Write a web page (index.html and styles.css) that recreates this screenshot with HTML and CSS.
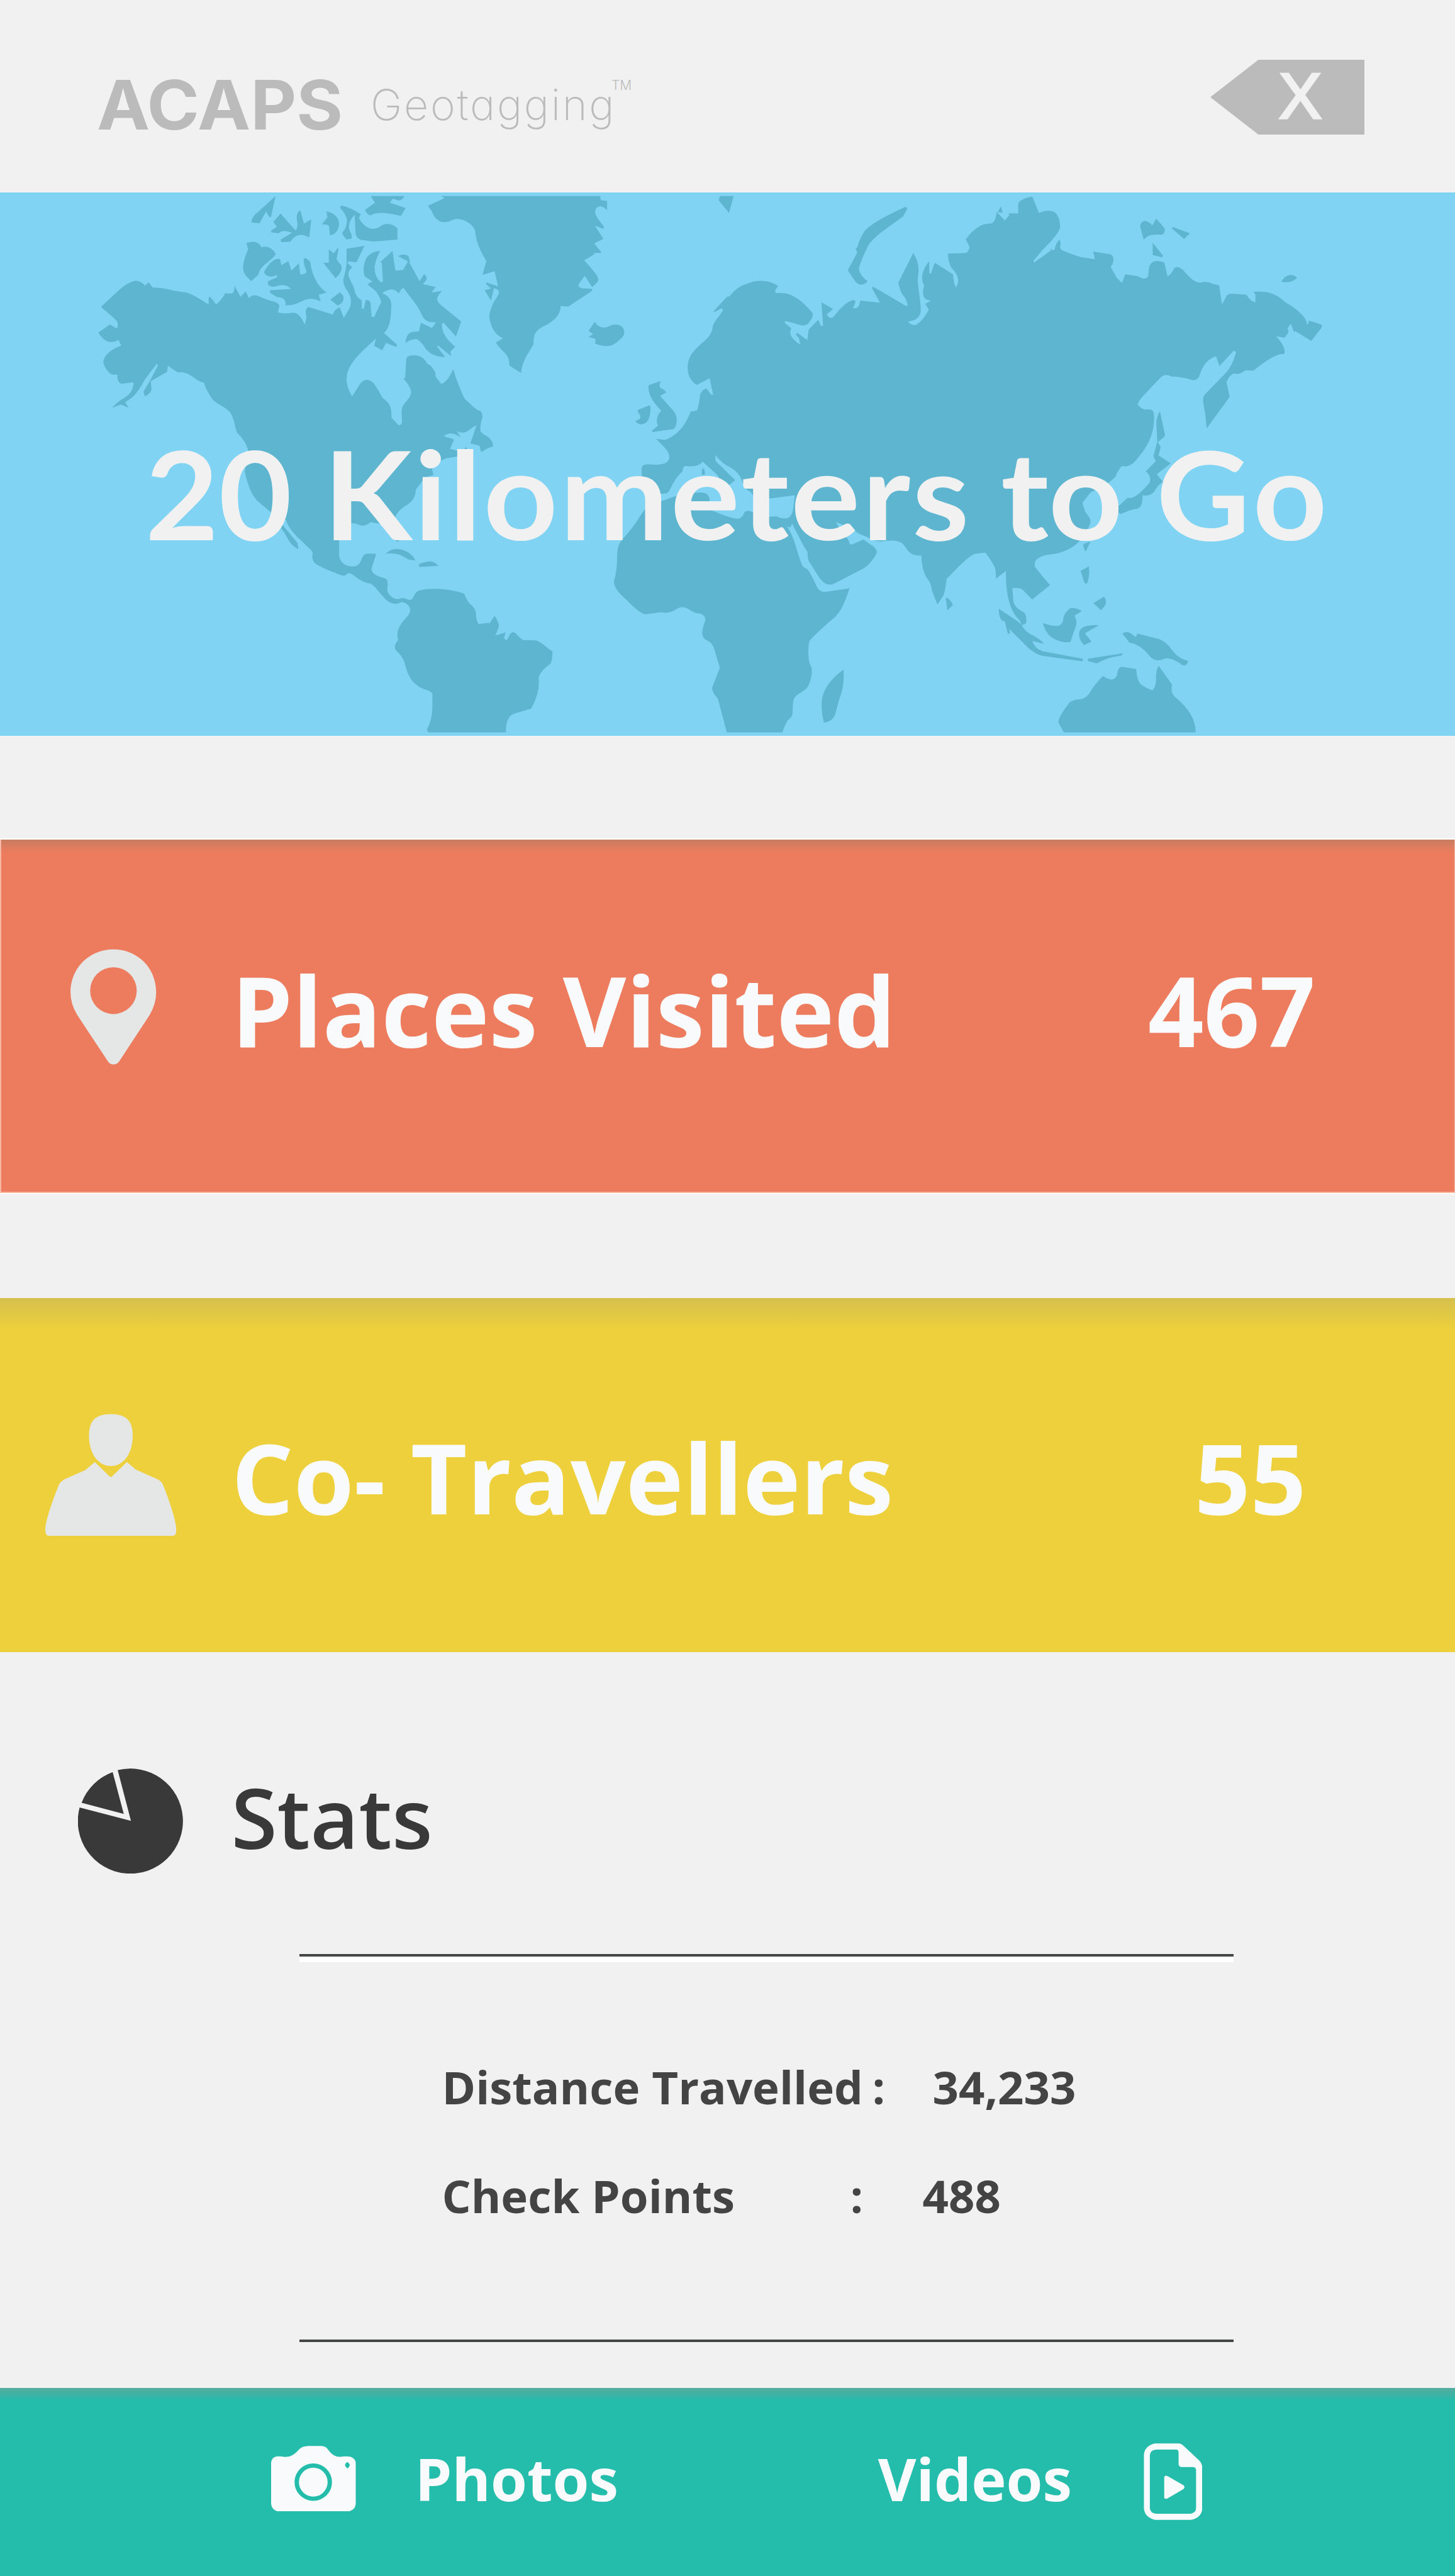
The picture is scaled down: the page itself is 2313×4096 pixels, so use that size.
FILE: index.html
```html
<!DOCTYPE html>
<html lang="en">
<head>
<meta charset="utf-8">
<title>ACAPS Geotagging</title>
<link rel="stylesheet" href="styles.css">
</head>
<body>
<header class="topbar">
  <div class="logo"><span class="brand">ACAPS</span><span class="product">Geotagging</span><span class="tm">TM</span></div>
  <svg class="close" viewBox="0 0 245 119"><path fill="#bbb" d="M0 59.5 76.500 0H245V119H76.500Z"/><text class="close-x" x="109" y="93">X</text></svg>
</header>

<section class="hero">
  <svg class="map" viewBox="0 354 2675 999.500" preserveAspectRatio="none" fill="#5db5cf">
    <!-- North America, northern half, with the Arctic islands -->
    <g transform="translate(150 350) scale(.510204 .333333)">
      <path d="M72,640 L125,565 Q170,500 198,500 Q210,502 226,520 L227,528 L242,508 L256,537 Q290,537 320,549 Q350,560 368,562 C395,565 430,605 458,630 L458,592 L463,588 L485,630 Q505,605 518,567 Q530,572 543,569 Q551,560 551,527 L573,588 L591,558 L603,594 Q615,576 630,580 C650,592 670,605 685,611 Q713,622 713,640 L707,674 Q735,684 760,676 Q785,670 804,742 L811,700 Q802,660 817,644 L906,686 Q908,660 930,646 L945,704 L962,660 Q972,640 970,600 Q968,575 955,550 Q942,520 943,490 Q955,430 955,390 L955,323 L1019,307 L991,397 L960,393 L958,401 L976,426 Q960,440 961,468 C970,510 980,520 985,560 Q990,590 1009,607 L1010,654 L1017,652 L1024,606 Q1036,604 1041,620 L1045,698 L1054,699 L1080,616 Q1070,570 1055,550 L1030,519 L1048,503 L1020,475 Q1012,440 1020,400 Q1030,340 1076,335 Q1060,380 1056,420 Q1055,480 1078,507 L1086,506 L1082,400 L1076,397 L1120,335 L1131,444 L1159,440 L1176,392 L1140,363 Q1165,345 1178,365 L1184,396 L1180,396 L1218,502 L1234,462 Q1248,480 1241,498 L1230,518 L1276,534 L1261,564 L1299,555 Q1282,580 1281,603 Q1283,620 1300,640 L1368,724 L1349,807 L1304,730 L1298,740 Q1298,785 1320,825 L1346,864 L1329,890 L1331,914 L1285,857 L1281,862 L1310,920 Q1265,920 1240,875 Q1220,825 1205,821 Q1185,822 1167,842 Q1170,800 1183,787 Q1192,778 1215,780 L1223,731 L1262,760 L1278,728 Q1245,734 1230,700 Q1215,650 1205,630 L1160,539 Q1150,545 1143,570 Q1130,545 1112,547 Q1095,552 1083,569 Q1115,585 1116,630 Q1116,760 1089,787 L1137,853 L1133,864 L1097,842 L1083,883 L1055,859 L1060,818 L1010,890 C965,960 955,1000 955,1050 Q958,1100 975,1137 L1005,1065 Q1030,1025 1055,1070 Q1072,1110 1085,1147 Q1117,1180 1116,1230 L1117,1255 L1142,1297 Q1153,1295 1155,1280 Q1154,1260 1153,1220 Q1153,1190 1172,1162 Q1190,1130 1187,1105 Q1180,1070 1159,1038 L1166,1037 L1170,930 Q1172,912 1195,911 Q1230,908 1246,958 Q1262,965 1275,1008 L1275,1027 L1296,1069 Q1320,1055 1339,987 Q1355,1070 1380,1150 Q1395,1170 1415,1200 Q1425,1214 1437,1218 Q1447,1235 1444,1255 Q1435,1300 1437,1328 Q1442,1343 1462,1358 Q1485,1385 1482,1415 Q1462,1420 1440,1446 L1434,1410 L1401,1397 L1423,1298 Q1415,1300 1395,1325 Q1375,1348 1352,1329 L1366,1364 Q1345,1340 1327,1341 Q1312,1347 1305,1357 L1342,1375 L1328,1427 Q1350,1437 1362,1438 Q1378,1437 1386,1416 L1396,1458 L1310,1480 Q1295,1490 1288,1500 L610,1500 L600,1433 Q592,1385 560,1337 C550,1290 550,1260 535,1225 C515,1190 490,1185 470,1150 Q450,1105 440,1061 Q430,1060 410,1040 Q378,1003 360,1004 Q350,1006 343,1002 L311,968 L308,1002 L249,1054 L252,1100 Q250,1120 228,1137 L223,1110 L245,1056 L276,964 L271,957 L230,1040 Q205,1110 185,1140 L157,1170 L170,1201 L142,1182 L110,1201 Q130,1165 155,1145 Q187,1115 187,1059 L145,1068 Q127,1060 129,1017 Q110,1022 100,1008 Q80,975 78,945 Q85,890 143,857 L133,826 Q120,838 100,837 Q80,832 60,786 L102,741 L127,763 Q135,735 125,718 Q110,695 72,647Z"/>
      <path d="M699,32 L682,149 Q675,150 665,117 L641,182 L612,178 Q612,150 630,127Z"/>
      <path d="M717,128 L771,222 Q782,205 776,165 Q772,125 788,110 L801,184 L828,160 L820,260 Q785,230 762,265 Q755,280 750,284 L720,286 L717,272 L758,235 Q725,212 710,238 L684,232 L683,222 L704,201 L691,175Z"/>
      <path d="M882,116 Q925,130 928,185 Q925,240 895,249 L892,200 Q892,188 866,188 L886,150Z"/>
      <path d="M936,84 Q970,95 1006,133 L999,153 Q1020,210 1050,213 Q1070,210 1082,193 Q1110,172 1138,210 L1138,272 L1052,283 L1005,273 Q988,260 987,235 L984,135 Q950,190 972,240 L974,266 L955,271 Q945,260 939,235 Q958,205 956,160 Q950,125 931,96Z"/>
      <path d="M1042,32 L1163,32 Q1155,60 1140,55 L1122,46 L1110,68 L1168,98 L1150,142 Q1085,115 1052,130 Q1040,145 1030,130 L1021,109 L1057,68Z"/>
      <path d="M594,291 Q635,270 648,315 Q680,300 700,352 Q690,375 660,410 Q640,435 637,465 L612,501 Q580,465 582,420 Q583,385 600,325Z"/>
      <path d="M700,380 L715,379 L720,414 L745,391 L756,443 L783,403 L788,465 Q812,465 810,445 Q800,410 800,380 L807,373 L824,395 C830,470 850,530 883,565 L854,577 L862,614 Q825,585 790,615 Q765,635 735,636 Q738,590 705,590 L678,565 L681,552 L755,545 Q735,510 700,530 Q670,540 671,503 L705,480 L703,468 Q670,490 657,452 Q680,390 700,380Z"/>
      <path d="M891,326 L909,349 L922,320 L926,322 L919,380 Q922,395 932,407 Q947,440 915,485 L871,400 L891,400Z"/>
      <path d="M931,563 L942,580 Q950,620 922,635 L896,604Z"/>
    </g>
    <!-- Greenland, Iceland, Svalbard, British Isles -->
    <g transform="translate(750 350) scale(.446429 .333333)">
      <path d="M136,32 L793,32 Q790,52 800,56 L820,59 L820,109 Q805,90 793,88 Q770,90 771,125 Q773,140 785,162 L808,204 L803,212 L770,195 L805,268 L767,293 L798,345 L765,346 L768,353 L726,386 L765,447 Q785,480 784,495 Q780,512 758,534 L728,472 L702,520 Q700,538 720,541 L758,544 L759,554 L660,642 L629,638 Q630,695 575,740 Q530,765 522,795 Q516,820 517,850 Q500,890 490,910 Q472,950 465,1008 L417,966 Q420,930 400,900 Q370,860 362,840 L392,817 Q345,790 335,700 Q335,670 352,620 Q378,570 375,560 Q370,542 354,541 L342,609 L316,552 L342,542 L322,518 L323,508 L371,530 L357,447 L307,467 L323,390 Q280,300 277,225 Q270,190 235,168 Q205,150 185,163 Q145,190 120,160 Q108,148 98,115 L82,86 L151,43Z"/>
      <path d="M769,726 Q790,770 825,752 Q860,730 880,750 Q900,780 884,810 Q860,840 850,848 Q820,872 771,846 L773,820 L744,809 L763,794 L744,776Z"/>
      <path d="M1285,32 L1341,32 L1322,125 L1280,55Z"/>
      <path d="M991,1076 L1042,1052 Q1030,1080 1042,1092 Q1060,1105 1064,1116 L1038,1135 L1080,1197 Q1110,1235 1107,1275 Q1103,1310 1093,1318 L1007,1334 L1006,1326 L1030,1299 Q1015,1260 1043,1216 Q985,1140 991,1076Z"/>
      <path d="M950,1210 L996,1186 Q1002,1200 996,1240 Q990,1290 960,1292 Q940,1288 937,1273 Q960,1265 957,1245 L945,1218Z"/>
    </g>
    <!-- North America, southern half, and South America -->
    <g transform="translate(450 750) scale(.510204 .389029)">
      <path d="M12,200 L0,300 Q15,400 45,440 L90,490 L130,530 L148,530 Q160,580 205,630 L240,675 Q247,685 243,700 Q243,730 260,742 Q300,770 325,780 Q345,793 355,794 Q365,793 370,784 Q380,778 395,795 Q430,830 450,830 Q465,838 480,865 L510,910 Q540,940 565,919 Q595,925 596,960 Q595,975 580,995 Q540,1050 553,1098 Q538,1120 542,1140 Q545,1150 555,1160 Q575,1190 578,1215 C590,1280 610,1310 645,1330 Q665,1337 676,1350 L676,1420 Q675,1480 656,1522 L662,1535 L941,1535 Q940,1455 975,1445 Q1020,1428 1032,1423 Q1065,1345 1059,1280 Q1060,1250 1102,1210 Q1108,1195 1109,1153 L1095,1140 Q1060,1100 1045,1100 Q1030,1098 1005,1099 Q995,1095 980,1072 Q970,1055 960,1065 Q955,1070 944,1101 L934,1090 L940,1062 L903,1077 L916,1035 Q915,1010 900,984 L881,1022 L879,1017 L842,1023 Q832,1000 833,970 Q830,945 810,925 Q800,912 791,879 Q740,856 685,856 Q640,857 625,866 Q613,875 606,900 Q600,913 590,908 Q570,895 560,903 Q540,910 525,890 Q512,875 514,850 Q518,815 507,808 C470,795 455,780 457,762 C462,730 468,720 473,691 Q445,688 435,692 Q425,698 420,720 Q410,755 385,750 Q345,745 340,700 L340,540 L400,548 Q415,558 428,558 Q445,552 453,541 L505,552 L548,634 L557,628 L543,520 Q545,490 590,455 Q618,425 616,388 L650,330 L680,318 L675,290 Q690,255 725,240 L690,200Z"/>
      <path d="M135,552 L190,640 L193,669 Q170,655 155,620 Q140,580 130,570Z"/>
      <path d="M508,690 Q525,668 545,668 C575,668 605,690 615,722 L592,719 Q580,710 570,702 Q545,685 508,690Z"/>
      <path d="M628,739 Q650,728 667,726 Q685,728 698,748 L628,753Z"/>
    </g>
    <!-- Europe, western Asia, Africa -->
    <g transform="translate(1150 350) scale(.510204 .644122)">
      <path d="M1465,18 Q1420,25 1415,40 L1415,66 L1380,66 L1383,71 L1367,86 L1340,64 L1353,46 L1359,64 L1338,62 Q1332,95 1315,95 Q1270,93 1226,140 L1240,162 Q1235,178 1225,179 L1162,181 Q1162,205 1175,222 Q1200,240 1199,262 L1191,278 Q1182,265 1180,240 L1114,207 L1101,238 L1095,237 L1094,203 Q1075,220 1069,243 Q1068,260 1076,272 Q1065,305 1085,312 L1101,316 L1080,324 L1093,341 Q1065,380 1043,385 Q1028,385 1017,375 Q1060,372 1064,345 C1064,310 1050,270 1054,245 Q1062,210 1037,179 L983,264 Q990,290 1000,300 Q1012,308 1017,330 L1010,330 L892,275 L888,279 L917,321 L845,315 Q843,340 820,337 L829,318 L822,313 Q790,320 757,354 Q740,375 725,354 L748,339 L706,320 L712,387 L705,388 L694,370 L660,398 L655,428 L619,407 L613,412 L625,422 L630,441 Q590,420 594,403 L597,394 L573,378 L577,373 L630,385 Q655,390 665,373 Q680,358 672,349 Q620,300 575,294 L555,293 Q535,296 540,285 L550,273 Q500,248 440,266 Q400,275 376,302 L365,305 L318,345 L320,348 L347,337 L351,343 L340,357 Q320,375 315,387 Q312,410 293,424 C240,460 225,475 224,508 Q225,540 257,556 L303,537 L316,584 L309,584 L291,566 Q267,572 267,595 Q265,615 257,629 L235,632 Q205,695 142,713 L110,710 L135,730 Q160,748 158,765 Q153,780 130,782 Q115,785 90,783 Q58,780 58,795 L60,855 L78,866 L110,868 L143,866 Q155,865 160,855 Q180,820 205,803 L208,792 Q212,785 225,788 Q265,790 278,775 L330,812 L360,850 L395,828 L370,808 L324,773 L324,756 Q350,782 375,790 Q410,805 420,830 Q432,858 450,860 L466,880 L522,880 L610,871 L605,905 Q600,935 580,937 Q560,938 545,931 L520,932 L465,922 Q440,910 428,920 Q420,940 400,938 Q370,935 300,910 L303,883 Q300,863 268,863 Q200,865 140,885 L85,898 Q60,920 45,940 Q20,970 -6,992 Q-30,1010 -30,1040 Q-30,1090 -42,1118 Q-40,1140 0,1167 Q45,1205 70,1211 L125,1205 Q155,1210 180,1198 Q205,1182 235,1200 Q250,1208 270,1209 Q288,1214 288,1228 Q272,1260 278,1272 Q283,1282 295,1286 Q310,1290 320,1310 L340,1364 L312,1420 Q312,1435 333,1452 L365,1548 L565,1548 Q580,1515 590,1510 Q602,1503 602,1490 Q603,1455 608,1450 C620,1435 650,1432 662,1410 Q675,1380 670,1362 Q655,1345 660,1300 Q660,1290 668,1282 Q700,1255 750,1222 Q780,1205 807,1137 L720,1147 Q700,1148 690,1133 Q665,1090 655,1082 L639,1075 Q630,1060 615,1020 Q600,980 582,960 L594,963 L600,952 L625,990 Q640,1015 656,1033 Q655,1055 665,1065 L700,1108 Q725,1135 755,1122 L860,1079 Q890,1062 906,1035 Q905,1020 880,1010 L858,997 L815,1012 L808,1010 Q803,990 780,980 L758,947 L775,953 L820,965 Q825,978 870,990 Q890,1002 920,1003 Q980,995 1000,1010 C1015,1022 1020,1045 1066,1043 Q1068,1090 1090,1112 Q1100,1120 1105,1145 L1124,1183 L1145,1158 Q1152,1145 1157,1110 L1200,1075 Q1245,1040 1260,1038 L1297,1035 Q1335,1075 1334,1090 L1335,1109 L1371,1087 Q1368,1190 1420,1228 L1428,1242 L1443,1237 Q1448,1215 1435,1205 Q1395,1190 1397,1165 L1394,1136 Q1420,1134 1430,1140 L1465,1168 L1475,1160 L1475,400 L1468,300 L1470,60Z"/>
      <path d="M1345,1195 L1412,1230 L1428,1242 Q1440,1262 1470,1272 Q1500,1285 1507,1295 L1466,1287 Q1475,1310 1505,1317 L1648,1338 L1647,1345 L1505,1330 Q1470,1325 1430,1290 L1382,1252 L1386,1265 L1378,1267 L1367,1231 Q1345,1230 1345,1195Z"/>
      <path d="M276,795 L284,795 L286,812 L275,812Z"/>
      <path d="M786,1369 Q788,1410 778,1435 Q765,1465 758,1490 Q748,1518 715,1520 Q700,1470 712,1440 Q730,1400 786,1369Z"/>
      <path d="M1154,1164 Q1165,1162 1180,1184 L1160,1200Z"/>
      <path d="M1009,47 L1016,52 L1000,75 L930,115 Q880,145 870,165 Q840,215 841,227 Q850,248 873,260 Q850,278 830,262 L801,229 L835,178 L829,165 L834,165 Q845,135 862,116 Q890,90 1009,47Z"/>
    </g>
    <!-- Eastern Asia, the Pacific islands and Australia -->
    <g transform="translate(1850 350) scale(.446429 .644122)">
      <path d="M107,18 L135,65 Q175,53 200,63 Q225,80 221,108 Q215,125 150,170 L112,201 L114,207 L186,171 L179,166 L198,172 Q203,150 220,141 Q226,150 222,160 Q220,168 232,172 Q300,192 320,192 L365,197 L358,175 L430,183 Q448,190 438,210 L430,219 L455,250 L477,265 L490,240 L540,245 Q585,262 586,238 Q585,205 615,202 Q640,202 651,207 L664,246 Q680,240 692,222 Q712,213 740,237 Q775,265 800,264 Q825,258 850,267 L877,272 L888,326 Q895,320 905,304 Q913,293 940,296 L989,298 Q1005,317 1026,320 L1026,298 L1018,290 C1080,287 1110,295 1150,320 Q1235,355 1239,383 L1242,384 L1247,372 L1299,384 L1299,392 L1256,430 L1190,402 L1185,405 L1172,381 L1158,394 Q1170,405 1145,421 L1111,417 Q1150,445 1146,465 L1143,468 Q1110,463 1018,515 L985,514 Q960,528 940,523 Q920,525 907,548 L920,590 L825,680 L820,640 C808,600 808,590 820,582 Q850,560 900,525 Q930,505 947,462 L937,458 L878,502 L864,474 Q815,485 798,525 Q790,545 765,542 Q725,532 680,532 Q655,522 635,535 L560,590 Q545,602 541,612 Q560,628 580,626 Q608,624 608,640 C612,690 590,730 525,778 Q500,792 477,787 Q458,800 450,818 L428,832 L400,845 L347,863 L314,892 Q320,915 335,928 Q350,940 346,950 Q335,975 300,1003 Q255,1035 180,1040 Q120,1045 112,1071 L180,1128 L107,1168 L92,1156 L90,30Z"/>
      <path d="M633,631 L651,690 Q655,700 651,704 L624,719 L636,733 L627,757 L677,780 L620,811 L645,833 Q620,845 612,858 Q595,875 561,871 Q562,905 540,909 Q510,912 470,925 L450,910 L500,878 Q530,885 590,835 Q600,820 575,802 L616,774 L606,759 L622,718 L618,665 Q620,645 633,631Z"/>
      <path d="M318,1010 L347,1003 L327,1032 Q316,1020 318,1010Z"/>
      <path d="M306,1087 L340,1074 Q346,1100 332,1124 L322,1121Z"/>
      <path d="M359,1179 L403,1160 Q417,1175 405,1188 L390,1199Z"/>
      <path d="M151,1236 Q190,1245 215,1244 Q235,1238 235,1222 Q240,1205 265,1193 Q285,1192 310,1200 L306,1204 L281,1215 Q293,1230 287,1245 Q275,1265 265,1289 L258,1291 Q170,1290 151,1236Z"/>
      <path d="M382,1242 L324,1265 L351,1289 L320,1299 Q295,1280 301,1262 Q305,1240 382,1242Z"/>
      <path d="M336,1338 L481,1322 L474,1329 Q420,1333 373,1351 L336,1344Z"/>
      <path d="M478,1266 Q500,1255 525,1272 L534,1276 L540,1266 L630,1282 Q660,1290 685,1315 Q710,1338 749,1344 Q745,1360 725,1356 Q680,1332 650,1338 Q615,1350 590,1330 Q550,1295 508,1292Z"/>
      <path d="M237,1548 L215,1520 Q213,1505 262,1462 Q275,1455 310,1453 Q335,1447 345,1433 Q360,1415 398,1387 Q440,1407 455,1387 Q460,1362 475,1361 L535,1367 Q538,1400 553,1410 Q570,1420 602,1428 Q615,1420 617,1400 Q615,1370 628,1358 L683,1412 Q675,1435 695,1447 Q780,1495 780,1548Z"/>
      <path d="M565,88 Q550,95 552,105 L566,141 Q585,123 640,127 Q655,123 653,110 Q640,98 617,81 L602,100 Q580,85 565,88Z"/>
      <path d="M681,108 L687,105 L756,123 L732,139Z"/>
      <path d="M603,150 L646,187 L641,191 L603,185Z"/>
      <path d="M1132,261 Q1160,230 1198,249 Q1175,267 1132,261Z"/>
    </g>
  </svg>
  <h1 class="headline"><span class="amount">20</span> <span class="unit">Kilometers</span> <span>to</span> <span class="go">Go</span></h1>
</section>

<section class="card places">
  <svg class="icon pin" viewBox="291 505 354 477" fill="#e5e7e6"><path fill-rule="evenodd" d="M468 506C568 506 644 584 644 684Q644 732 617 777L492 968Q483 981 468 981T445 968L319 777Q291 732 291 684C291 584 368 506 468 506ZM468 580A96 96.500 0 1 0 468 773A96 96.500 0 1 0 468 580Z"/></svg>
  <span class="label">Places Visited</span><span class="count">467</span>
</section>

<section class="card travellers">
  <svg class="icon person" viewBox="187 516 540 504" fill="#e5e7e6"><path d="M457 517C520 517 547 545 547 605C547 680 510 731 457 731S367 680 367 605C367 545 394 517 457 517Z"/><path d="M391 715 452 774Q457 779 462 774L523 715 560 746 650 786Q665 794 671 806C700 878 727 960 727 995Q727 1019 712 1019H202Q187 1019 187 995C187 960 214 880 244 806Q250 796 264 787L352 748Z"/></svg>
  <span class="label">Co- Travellers</span><span class="count">55</span>
</section>

<section class="stats">
  <div class="stats-head">
    <svg class="pie" viewBox="0 0 193.500 193.500" fill="#393939"><path d="M97.400 96.300 73 3A96.700 96.700 0 1 1 3 71.700Z"/><path d="M84.200 83.700 63.800 6.700A96.700 96.700 0 0 0 6.600 63Z"/></svg>
    <h2>Stats</h2>
  </div>
  <div class="figures">
    <div class="figure distance"><span class="name">Distance Travelled</span><span class="colon">:</span><span>34,233</span></div>
    <div class="figure points"><span class="name">Check Points</span><span class="colon">:</span><span>488</span></div>
  </div>
</section>

<footer class="tabs">
  <a class="tab photos"><svg class="camera" viewBox="171 743 272 362" preserveAspectRatio="none" fill="#f9fafc"><path fill-rule="evenodd" d="M290 744H332Q347 744 355 768Q372 806 392 804Q420 797 431 808Q442 818 442 840V1065Q440 1095 422 1104H190Q174 1096 171 1065V835Q173 808 187 802Q200 799 215 805Q240 806 262 760Q272 745 290 744ZM306 840A60 103.500 0 1 0 306 1047A60 103.500 0 1 0 306 840ZM415 832Q400 848 416 868Q430 848 415 832Z"/><ellipse cx="306" cy="943.500" rx="46" ry="80"/></svg><span>Photos</span></a>
  <a class="tab videos"><span>Videos</span><svg class="file" viewBox="1049 729 189 423" preserveAspectRatio="none" fill="#f9fafc"><path fill-rule="evenodd" d="M1085 730H1160Q1170 730 1178 745L1228 825Q1237 842 1237 862V1090Q1234 1140 1200 1151H1085Q1053 1138 1050 1090V790Q1053 743 1085 730ZM1090 764Q1070 766 1069 795V1090Q1072 1115 1088 1117H1200Q1216 1112 1217 1088V875Q1216 860 1205 860H1170Q1161 858 1161 842V782Q1161 764 1153 764Z"/><path d="M1115 915Q1117 903 1126 910L1176 960Q1184 971 1176 982L1126 1032Q1117 1040 1115 1028Z"/></svg></a>
</footer>
</body>
</html>
```
FILE: styles.css
```css
* { box-sizing: border-box; margin: 0; padding: 0; }

body {
  width: 2313px;
  height: 4096px;
  background: #f1f1f1;
  font-family: "Open Sans", sans-serif;
  font-weight: 700;
  line-height: 1;
  overflow: hidden;
}

svg { display: block; flex: none; }

/* Top bar */
.topbar { display: flex; height: 306px; padding: 95px 144px 0 154px; color: #bbb; }
.logo { display: grid; grid-template-columns: 435px 383px auto; align-items: start; font-family: Inter, sans-serif; white-space: nowrap; }
.brand { font-size: 108px; margin-top: 17.5px; transform: scaleX(1.045); transform-origin: 0 0; }
.product { font-size: 68px; font-weight: 200; margin-top: 37px; letter-spacing: 2.700px; font-feature-settings: "cv11"; }
.tm { font-size: 21px; font-weight: 300; margin-top: 29.500px; }
.close { width: 245px; height: 119px; margin-left: auto; }
.close-x { font: 400 102px "Liberation Sans", Arial, sans-serif; fill: #f1f1f1; stroke: #f1f1f1; stroke-width: 3.500px; }

/* Map banner */
.hero { display: grid; height: 864px; background: #80d3f2; }
.map { grid-area: 1 / 1; width: 2313px; height: 864px; }
.headline {
  grid-area: 1 / 1;
  display: grid;
  grid-template-columns: 283px 1077px 247px auto;
  justify-content: start;
  align-content: start;
  padding: 380px 0 0 231px;
  font: 700 196px/1 Lato, sans-serif;
  color: #f1f1f1;
  white-space: nowrap;
}
.headline span { transform: scaleX(1.05); transform-origin: 0 0; }
.headline .amount { transform: scaleX(1.025); }
.unit { letter-spacing: 3.200px; }
.go { letter-spacing: 5px; }

/* Summary cards */
.card { display: grid; grid-template-columns: 368px 1457px auto; align-items: start; font-size: 155px; color: #f9fafc; white-space: nowrap; }
.places {
  height: 562px;
  margin-top: 165px;
  background: linear-gradient(#c97c61, #ed7c5e 21px);
  border: solid #f7b9a5;
  border-width: 0 1px 2px 2px;
  box-shadow: 0 0 0 2px #fff;
  grid-template-columns: 366px 1457px auto;
}
.places .label, .places .count { margin-top: 192px; }
.pin { width: 136.700px; height: 184px; margin: 174px 0 0 110px; }
.travellers { height: 562.500px; margin-top: 167px; background: linear-gradient(#d5c04d, #edd03b 50px); }
.travellers .label, .travellers .count { margin-top: 206px; }
.travellers .count { padding-left: 74px; }
.person { width: 208.400px; height: 194.500px; margin: 184px 0 0 72px; }

/* Stats */
.stats { height: 1170px; }
.stats-head { display: grid; grid-template-columns: 367.500px auto; align-items: start; height: 480.500px; color: #393939; }
.pie { width: 167.200px; height: 167.200px; margin: 185px 0 0 124.300px; }
.stats-head h2 { font-size: 133px; font-weight: 600; margin-top: 195px; }
.figures {
  width: 1485px;
  height: 617px;
  margin-left: 475.500px;
  padding: 171px 0 0 227px;
  border: solid #444646;
  border-width: 4px 0;
  box-shadow: inset 0 2px #f1f1f1, inset 0 9px #fff;
  font-size: 72.500px;
  color: #444;
  white-space: nowrap;
}
.figure { display: grid; }
.distance { grid-template-columns: 684px 96px auto; }
.points { grid-template-columns: 649px 115px auto; margin-top: 100px; }

/* Bottom tabs */
.tabs { display: flex; height: 299.500px; padding-left: 430.700px; background: linear-gradient(#55ac9f, #31b7a9 16px, #24bdac 19px); font-size: 93.600px; color: #f9fafc; }
.tab { display: flex; align-items: flex-start; }
.photos { width: 965px; }
.photos span { margin: 97px 0 0 94px; }
.camera { width: 135px; height: 104.300px; margin-top: 92px; }
.videos span { width: 422px; margin-top: 97px; }
.file { width: 93.800px; height: 122px; margin-top: 88px; }
```
